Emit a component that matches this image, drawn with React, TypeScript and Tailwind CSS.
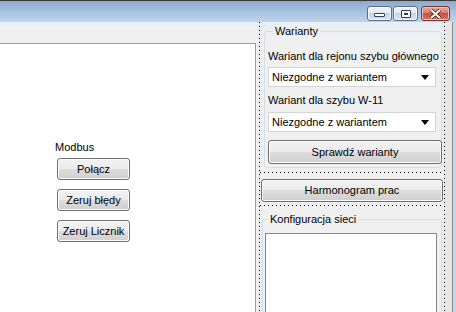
import React from "react";

const font = "font-['Liberation_Sans',Arial,sans-serif]";

const btn =
  "flex items-center justify-center rounded-[3px] border border-[#707070] bg-[linear-gradient(to_bottom,#f2f2f2_0%,#ebebeb_50%,#dddddd_50%,#cfcfcf_100%)] shadow-[inset_0_0_0_1px_#fcfcfc] text-[11px] text-black whitespace-nowrap";

const DotsV = () => (
  <div className="w-px self-stretch bg-[repeating-linear-gradient(to_bottom,#000_0_1px,#e4e4e4_1px_4px)]" />
);

const DotsH = () => (
  <div className="h-px w-full shrink-0 bg-[repeating-linear-gradient(to_right,#000_0_1px,transparent_1px_4px)]" />
);

const Combo = ({ text }: { text: string }) => (
  <div className="h-[20px] mr-[5px] flex items-center justify-between border border-[#d4d4d4] bg-white pl-[3px] pr-[6px] text-[11px]">
    <span>{text}</span>
    <svg width="8" height="5" viewBox="0 0 8 5">
      <path d="M0 0h8L4 5z" fill="#000" />
    </svg>
  </div>
);

const GroupBox = ({ title, children, className, titleClass }: { title: string; children?: React.ReactNode; className?: string; titleClass?: string }) => (
  <div className={"relative border border-[#d5dfe5] rounded-[3px] shrink-0 " + (className ?? "")}>
    <span className={"absolute -top-[8px] bg-[#f0f0f0] px-[2px] text-[11px] leading-[14px] whitespace-nowrap " + (titleClass ?? "left-[5px]")}>{title}</span>
    {children}
  </div>
);

const CaptionBtn = ({ kind }: { kind: "min" | "max" | "close" }) => {
  if (kind === "close") {
    return (
      <div className="w-[29px] h-[15px] rounded-[3px] border border-[#6d3a33] bg-[linear-gradient(to_bottom,#e9a99b_0%,#d7796a_50%,#c5503f_50%,#d4766a_100%)] shadow-[inset_0_0_0_1px_#f1c2b8] flex items-center justify-center">
        <svg width="13" height="10" viewBox="0 0 13 10">
          <path d="M2 1l4.5 4L11 1M2 9l4.5-4L11 9" stroke="#4a2019" strokeWidth="3.6" fill="none" />
          <path d="M2 1l4.5 4L11 1M2 9l4.5-4L11 9" stroke="#fff" strokeWidth="2" fill="none" />
        </svg>
      </div>
    );
  }
  return (
    <div className="w-[25px] h-[15px] rounded-[3px] border border-[#5a6e8c] bg-[linear-gradient(to_bottom,#f1f5fa_0%,#dde7f2_50%,#c6d5e6_50%,#d8e3ef_100%)] shadow-[inset_0_0_0_1px_#f7fafd] flex items-center justify-center">
      {kind === "min" ? (
        <div className="w-[11px] h-[4px] mt-[3px] rounded-[1px] border border-[#2f3f59] bg-white" />
      ) : (
        <div className="w-[10px] h-[8px] rounded-[1px] border border-[#2f3f59] bg-white flex items-center justify-center">
          <div className="w-[4px] h-[2px] border border-[#2f3f59]" />
        </div>
      )}
    </div>
  );
};

export default function App() {
  return (
    <div className={"w-[456px] h-[312px] overflow-hidden flex flex-col bg-[#f0f0f0] text-black " + font}>
      {/* title bar */}
      <div className="h-[22px] shrink-0 border-t border-[#3a3a3a] bg-[linear-gradient(to_bottom,#8ea9cc_0%,#a7c1df_50%,#c0d4ec_100%)] flex items-start justify-end pr-[6px] pt-[5px] gap-[1px]">
        <CaptionBtn kind="min" />
        <CaptionBtn kind="max" />
        <div className="w-[1px]" />
        <CaptionBtn kind="close" />
      </div>

      <div className="flex-1 flex min-h-0">
        {/* left */}
        <div className="w-[256px] flex flex-col">
          <div className="h-[21px] shrink-0 bg-[linear-gradient(to_bottom,#e7eef6_0%,#f0f0f0_30%)]" />
          <div className="flex-1 bg-white border-t border-r border-[#9a9a9a] pl-[55px] pt-[96px] text-[11px]">
            <div className="leading-[14px]">Modbus</div>
            <div className="pl-[2px] pt-[4px] flex flex-col gap-[9px]">
              <div className={btn + " w-[73px] h-[22px]"}>Połącz</div>
              <div className={btn + " w-[73px] h-[22px]"}>Zeruj błędy</div>
              <div className={btn + " w-[73px] h-[22px]"}>Zeruj Licznik</div>
            </div>
          </div>
        </div>

        {/* right */}
        <div className="flex-1 flex bg-[linear-gradient(to_bottom,#e7eef6_0%,#f0f0f0_6%)]">
          <div className="w-[3px]" />
          <DotsV />
          <div className="flex-1 flex flex-col pt-[9px] text-[11px] min-w-0">
            <GroupBox title="Warianty" titleClass="left-[8px]" className="ml-[4px] mr-[2px] h-[137px] pl-[3px] pt-[17px]">
              <div className="leading-[14px] mb-[4px] whitespace-nowrap">Wariant dla rejonu szybu głównego</div>
              <Combo text="Niezgodne z wariantem" />
              <div className="leading-[14px] mt-[6px] mb-[5px]">Wariant dla szybu W-11</div>
              <Combo text="Niezgodne z wariantem" />
              <div className={btn + " h-[24px] mt-[8px] -mr-[1px]"}>Sprawdź warianty</div>
            </GroupBox>
            <div className="h-[4px] shrink-0" />
            <DotsH />
            <div className="h-[6px] shrink-0" />
            <div className={btn + " h-[23px] shrink-0 ml-[1px] mr-[1px]"}>Harmonogram prac</div>
            <div className="h-[3px] shrink-0" />
            <DotsH />
            <div className="h-[13px] shrink-0" />
            <GroupBox title="Konfiguracja sieci" className="ml-[2px] mr-[2px] flex-1 pl-[2px] pr-[4px] pt-[13px] border-b-0 rounded-b-none">
              <div className="h-full bg-white border border-[#828790] border-b-0" />
            </GroupBox>
          </div>
          <DotsV />
          <div className="w-[7px] bg-[#e6e6e6]" />
          <div className="w-px bg-[#8a8a8a]" />
          <div className="w-[3px] bg-[#c2d5ea]" />
        </div>
      </div>
    </div>
  );
}
